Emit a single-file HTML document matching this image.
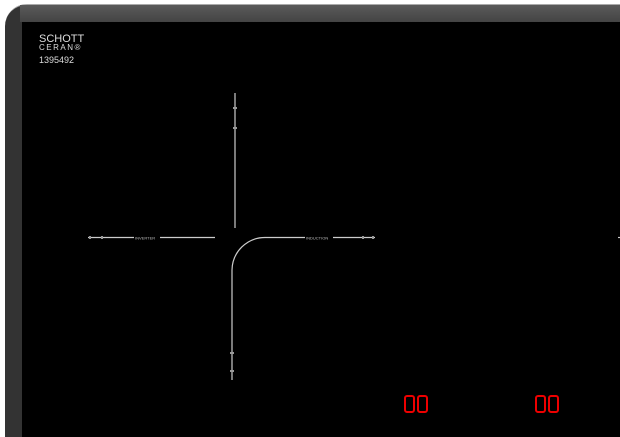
<!DOCTYPE html>
<html><head><style>
html,body{margin:0;width:620px;height:437px;overflow:hidden}
body{background:#fff;position:relative;font-family:"Liberation Sans",sans-serif}
.frame{position:absolute;left:5px;top:4px;width:615px;height:433px;background:#333;border-radius:22px 0 0 0;border-top:1px solid #aaa;box-sizing:border-box}
.top{position:absolute;left:20px;top:5px;width:600px;height:17px;background:linear-gradient(#5a5a5a,#444)}
.in{position:absolute;left:22px;top:22px;width:598px;height:415px;background:#000}
</style></head><body>
<div class="frame"></div>
<div class="top"></div>
<div class="in"></div>
<div style="position:absolute;left:39px;top:34px;color:#ddd;font-size:11px;line-height:11px">SCHOTT</div>
<div style="position:absolute;left:39px;top:44px;color:#ddd;font-size:8px;letter-spacing:1.5px;line-height:8px">CERAN<span style="font-size:8px">®</span></div>
<div style="position:absolute;left:39px;top:55px;color:#ddd;font-size:9px;line-height:10px">1395492</div>
<svg style="position:absolute;left:0;top:0" width="620" height="437">
<g stroke="#ccc" stroke-width="1.2" fill="none">
<line x1="235" y1="93" x2="235" y2="228"/>
<line x1="88" y1="237.5" x2="215" y2="237.5"/>
<path d="M375 237.5 H265 A33 33 0 0 0 232 270 V380"/>
<line x1="618" y1="237.5" x2="620" y2="237.5"/>
</g>
<g fill="#999"><rect x="233" y="107" width="4" height="2"/><rect x="233" y="127" width="4" height="2"/>
<rect x="230" y="352" width="4" height="2"/><rect x="230" y="370" width="4" height="2"/>
<rect x="89" y="236" width="2" height="3"/><rect x="101" y="236" width="2" height="3"/>
<rect x="362" y="236" width="2" height="3"/><rect x="372" y="236" width="2" height="3"/></g>
<rect x="134" y="235" width="26" height="5" fill="#000"/><text x="135" y="239.5" font-size="4" fill="#bbb" font-family="Liberation Sans">INVERTER</text>
<rect x="305" y="235" width="28" height="5" fill="#000"/><text x="306" y="239.5" font-size="4" fill="#bbb" font-family="Liberation Sans">INDUCTION</text>
<g stroke="#e00" stroke-width="2" fill="none">
<rect x="405" y="396" width="9" height="16" rx="2"/><rect x="418" y="396" width="9" height="16" rx="2"/>
<rect x="536" y="396" width="9" height="16" rx="2"/><rect x="549" y="396" width="9" height="16" rx="2"/>
</g>
</svg>
</body></html>
